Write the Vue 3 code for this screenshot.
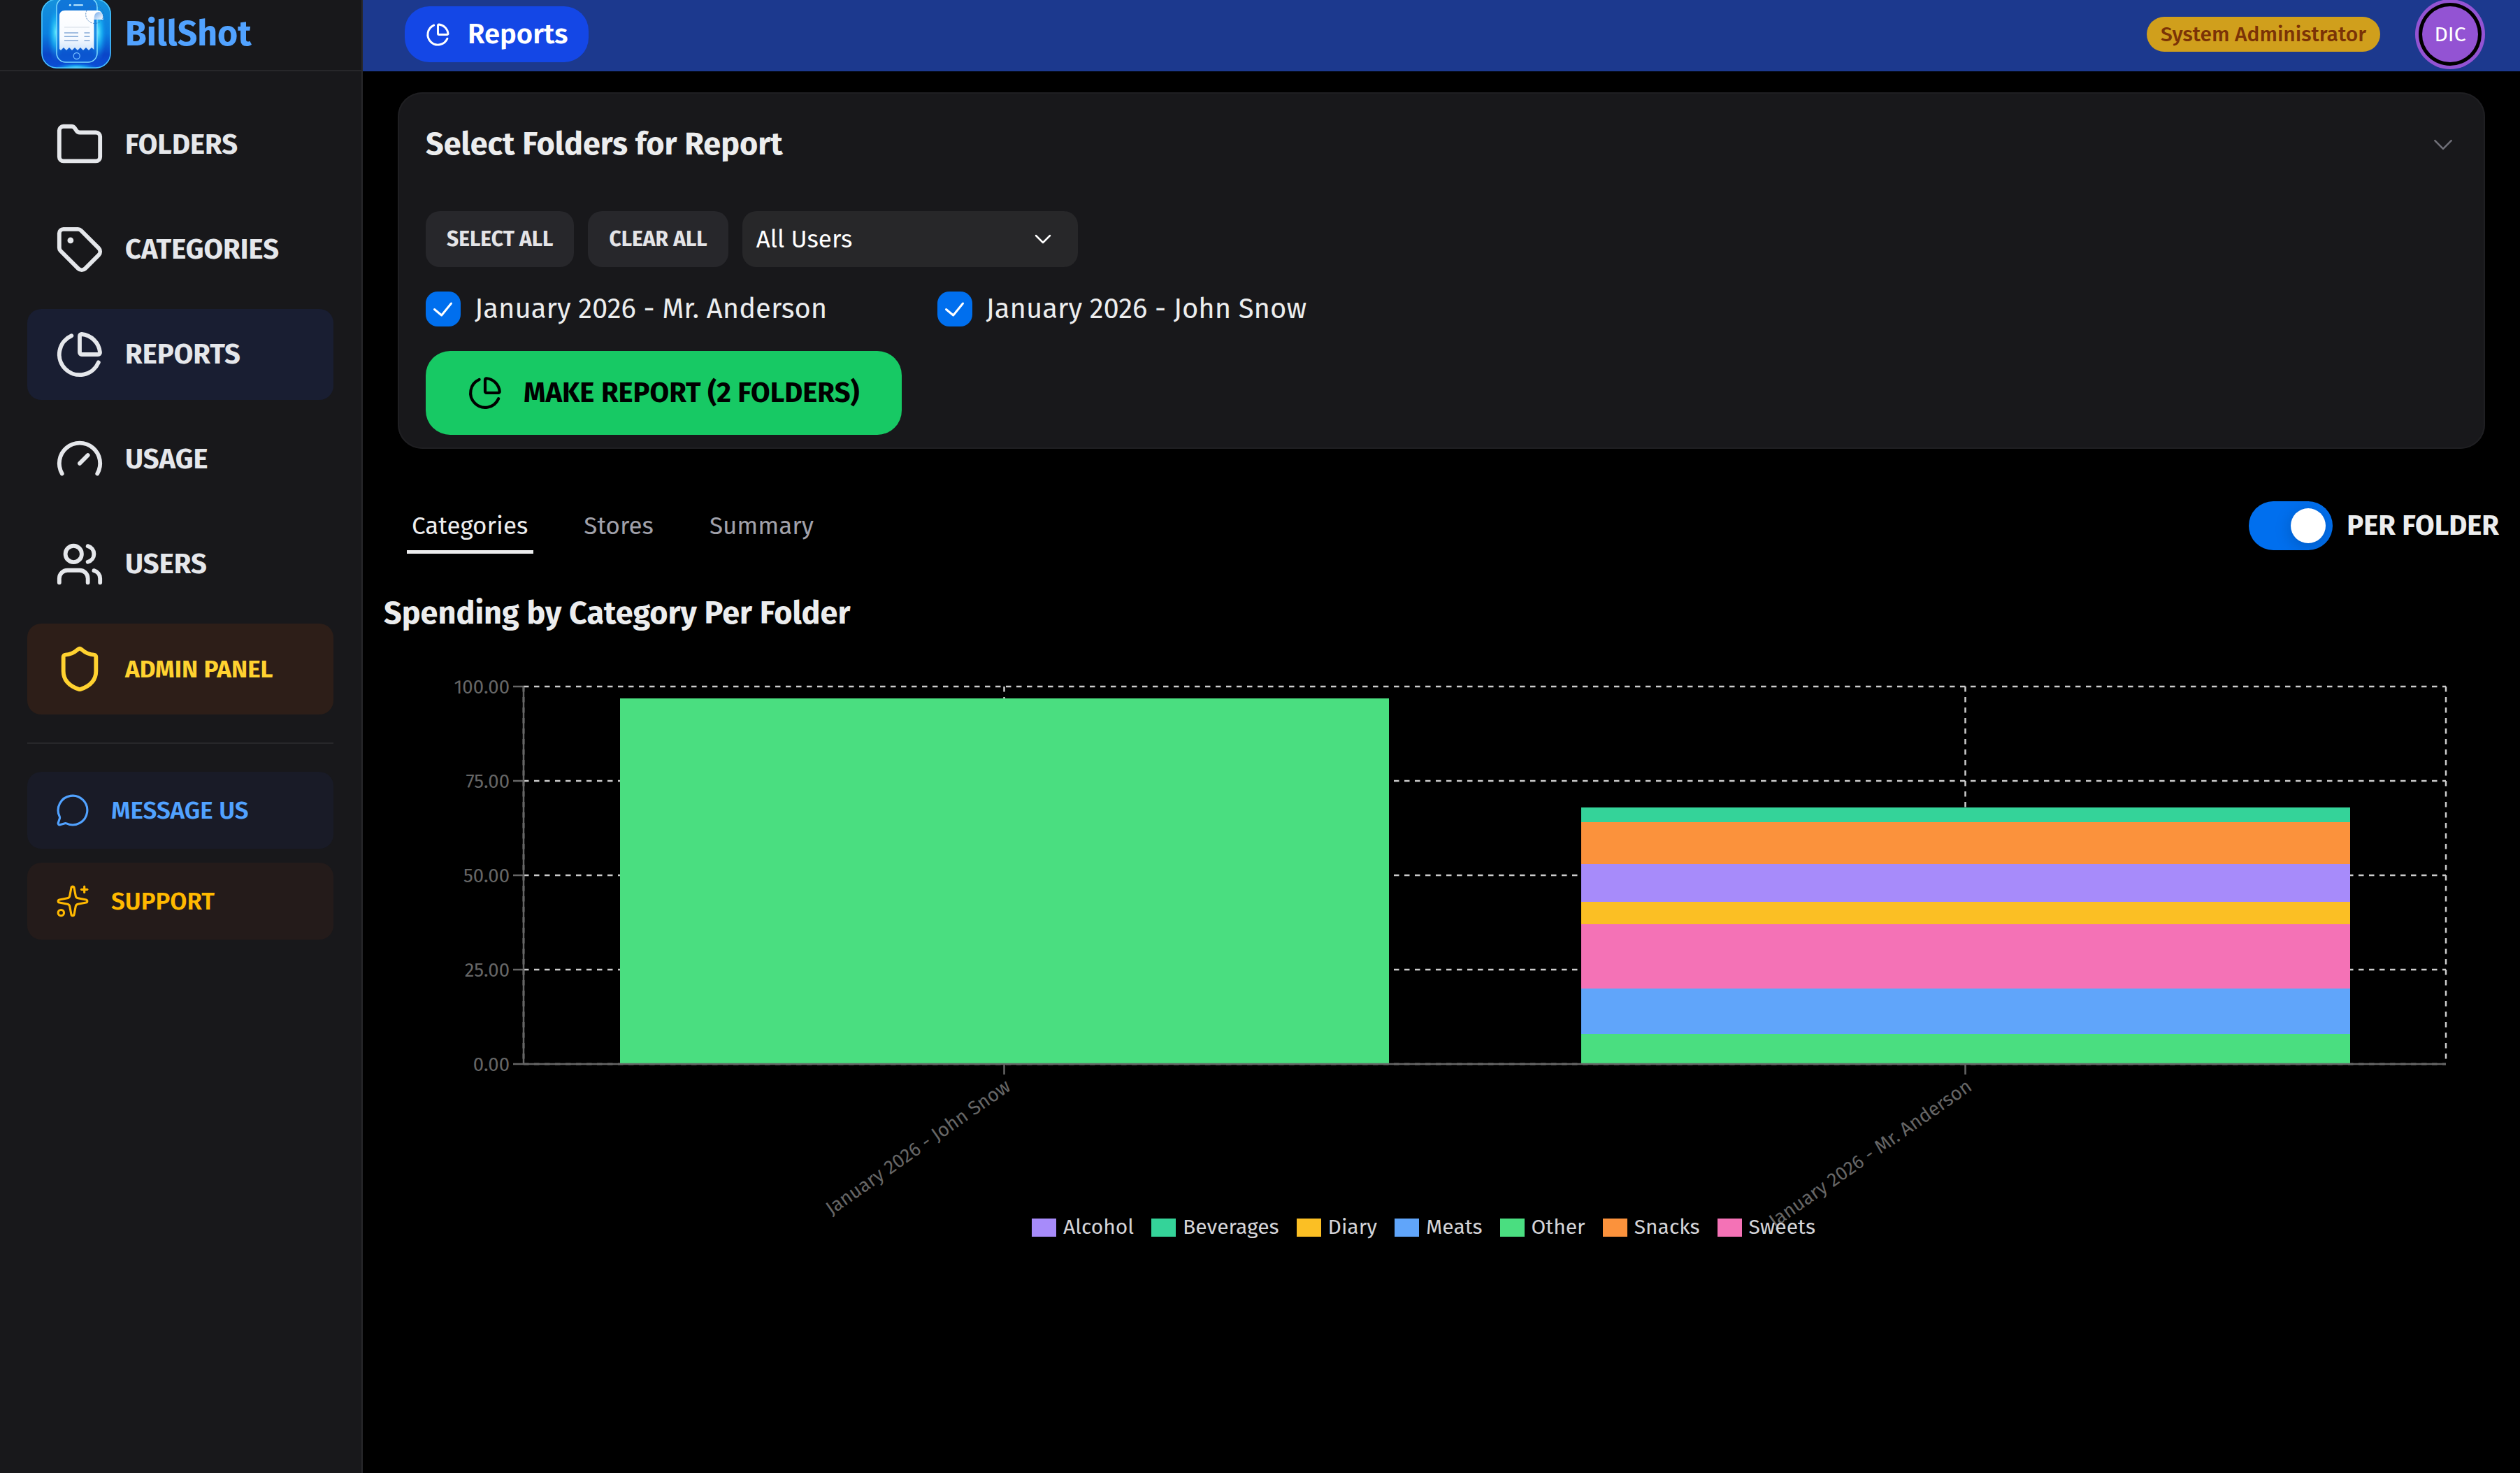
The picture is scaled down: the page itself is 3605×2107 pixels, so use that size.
<template>
	<div class="app">
		<aside class="sidebar">
			<div class="brand">
				<svg class="brand-logo" viewBox="0 0 100 100">
					<defs>
						<linearGradient id="tile" x1="0" y1="0" x2="0" y2="1">
							<stop offset="0" stop-color="#1592dc" />
							<stop offset="0.5" stop-color="#0b80e0" />
							<stop offset="0.8" stop-color="#0a45c8" />
							<stop offset="1" stop-color="#0b4fd8" />
						</linearGradient>
						<radialGradient id="glow">
							<stop offset="0" stop-color="#5feaff" />
							<stop offset="0.5" stop-color="#18b4f5" stop-opacity="0.7" />
							<stop offset="1" stop-color="#0b7be0" stop-opacity="0" />
						</radialGradient>
						<linearGradient id="paper" x1="0" y1="0" x2="0" y2="1">
							<stop offset="0" stop-color="#fff" />
							<stop offset="0.7" stop-color="#f6faff" />
							<stop offset="1" stop-color="#cfe4fb" />
						</linearGradient>
						<linearGradient id="curl" x1="0" y1="0" x2="1" y2="1">
							<stop offset="0" stop-color="#6ea8ea" />
							<stop offset="1" stop-color="#fff" />
						</linearGradient>
						<clipPath id="tileClip"><rect width="100" height="100" rx="22" /></clipPath>
					</defs>
					<g clip-path="url(#tileClip)">
						<rect width="100" height="100" fill="url(#tile)" />
						<ellipse cx="21" cy="48" rx="13" ry="42" fill="url(#glow)" />
						<ellipse cx="81" cy="48" rx="13" ry="42" fill="url(#glow)" />
						<ellipse cx="50" cy="99" rx="32" ry="7" fill="url(#glow)" />
						<rect x="22" y="-1" width="58" height="92" rx="13" fill="#0c62d6" fill-opacity="0.55" stroke="#7fdcff" stroke-width="1.5" />
						<rect x="1" y="1" width="98" height="98" rx="21" fill="none" stroke="#4cc3f7" stroke-width="1.5" />
					</g>
					<circle cx="41.3" cy="9.3" r="1.5" fill="#c9f0ff" />
					<path d="M47 9.3h12" stroke="#c9f0ff" stroke-width="2" stroke-linecap="round" />
					<path d="M26 25q0-8 8-8h46q8.500 0 8.500 13H75.500v43l-3.500-3-4 4-4-4-4 4-4-4-4 4-4-4-4 4-4-4-4 4-4-4-4 4-2-2z" fill="url(#paper)" />
					<path d="M75.500 30q0-11 7-11 6 0 6 11z" fill="url(#curl)" />
					<path d="M33 41h36" stroke="#d3dbe5" stroke-width="1" />
					<path d="M33 49h20M61.500 49h8M33 54.300h20M61.500 54.300h8M33 60h20M61.500 60h8" stroke="#86abd8" stroke-width="1.600" />
					<circle cx="76.500" cy="22.700" r="12.800" fill="none" stroke="#2f6fb4" stroke-width="0.800" stroke-dasharray="2.500 1.500" />
					<circle cx="50.700" cy="82" r="4.500" fill="none" stroke="#6fb8ff" stroke-width="1.300" />
				</svg>
				<span>BillShot</span>
			</div>

			<nav class="nav">
				<a v-for="item in navItems" :key="item.label" class="nav-item" :class="item.variant">
					<svg class="icon" viewBox="0 0 24 24">
						<path v-for="d in icons[item.icon]" :key="d" :d="d" />
					</svg>
					{{ item.label }}
				</a>
			</nav>

			<div class="divider"></div>

			<div class="nav">
				<a v-for="item in helpItems" :key="item.label" class="nav-item small" :class="item.variant">
					<svg class="icon" viewBox="0 0 24 24">
						<path v-for="d in icons[item.icon]" :key="d" :d="d" />
					</svg>
					{{ item.label }}
				</a>
			</div>
		</aside>

		<div class="main">
			<header class="topbar">
				<div class="page-pill">
					<svg class="icon" viewBox="0 0 24 24">
						<path v-for="d in icons.pie" :key="d" :d="d" />
					</svg>
					Reports
				</div>
				<div class="account">
					<span class="role">System Administrator</span>
					<span class="avatar">DIC</span>
				</div>
			</header>

			<main class="content">
				<section class="card">
					<div class="card-header">
						<h2>Select Folders for Report</h2>
						<svg class="icon" viewBox="0 0 24 24"><path d="M5 8.500l7 7 7-7" /></svg>
					</div>
					<div class="card-body">
						<div class="filters">
							<button class="btn">SELECT ALL</button>
							<button class="btn">CLEAR ALL</button>
							<div class="select">
								All Users
								<svg class="icon" viewBox="0 0 24 24"><path d="m6 9 6 6 6-6" /></svg>
							</div>
						</div>
						<div class="folders">
							<label v-for="folder in folders" :key="folder" class="folder">
								<span class="check">
									<svg viewBox="0 0 50 50"><polyline points="12.5,25.5 22.7,34 36.5,17" /></svg>
								</span>
								{{ folder }}
							</label>
						</div>
						<button class="make-report">
							<svg class="icon" viewBox="0 0 24 24">
								<path v-for="d in icons.pie" :key="d" :d="d" />
							</svg>
							MAKE REPORT ({{ folders.length }} FOLDERS)
						</button>
					</div>
				</section>

				<div class="toolbar">
					<div class="tabs">
						<div v-for="tab in tabs" :key="tab" class="tab" :class="{ active: tab === activeTab }" @click="activeTab = tab">
							{{ tab }}
						</div>
					</div>
					<label class="toggle">
						<span class="track"><span class="thumb"></span></span>
						PER FOLDER
					</label>
				</div>

				<h2 class="chart-title">Spending by Category Per Folder</h2>

				<div class="chart">
					<svg class="plot" viewBox="0 0 3026 850">
						<g class="grid">
							<line v-for="t in ticks" :key="t" :x1="plot.left" :x2="plot.right" :y1="yOf(t)" :y2="yOf(t)" />
							<line v-for="x in gridX" :key="x" :x1="x" :x2="x" :y1="plot.top" :y2="plot.bottom" />
						</g>
						<g class="axis">
							<line :x1="plot.left" :x2="plot.left" :y1="plot.top" :y2="plot.bottom" />
							<g v-for="t in ticks" :key="t">
								<line :x1="plot.left - 15" :x2="plot.left" :y1="yOf(t)" :y2="yOf(t)" />
								<text :x="plot.left - 20" :y="yOf(t)" dy="0.355em" text-anchor="end">{{ t.toFixed(2) }}</text>
							</g>
						</g>
						<rect v-for="b in rects" :key="b.key" :x="b.x" :y="b.y" :width="barWidth" :height="b.h" :fill="b.color" shape-rendering="crispEdges" />
						<g class="axis">
							<line :x1="plot.left" :x2="plot.right" :y1="plot.bottom" :y2="plot.bottom" />
							<g v-for="(bar, i) in bars" :key="bar.label">
								<line :x1="centerOf(i)" :x2="centerOf(i)" :y1="plot.bottom" :y2="plot.bottom + 15" />
								<text :x="centerOf(i)" :y="plot.bottom + 20" dy="0.71em" text-anchor="end" :transform="`rotate(-35, ${centerOf(i)}, ${plot.bottom + 20})`">{{ bar.label }}</text>
							</g>
						</g>
					</svg>
					<div class="legend">
						<span v-for="(color, name) in colors" :key="name" class="legend-item">
							<i :style="{ background: color }"></i>{{ name }}
						</span>
					</div>
				</div>
			</main>
		</div>
	</div>
</template>

<script setup>
import { ref, computed } from 'vue'

const icons = {
	folder: ['M20 20a2 2 0 0 0 2-2V8a2 2 0 0 0-2-2h-7.900a2 2 0 0 1-1.690-.900L9.600 3.900A2 2 0 0 0 7.930 3H4a2 2 0 0 0-2 2v13a2 2 0 0 0 2 2Z'],
	tag: [
		'M12.586 2.586A2 2 0 0 0 11.172 2H4a2 2 0 0 0-2 2v7.172a2 2 0 0 0 .586 1.414l8.704 8.704a2.426 2.426 0 0 0 3.420 0l6.580-6.580a2.426 2.426 0 0 0 0-3.420z',
		'M7 7.500a.5.5 0 1 0 1 0a.5.5 0 1 0-1 0',
	],
	pie: [
		'M21 12c.552 0 1.005-.449.950-.998a10 10 0 0 0-8.953-8.951c-.550-.055-.998.398-.998.950v8a1 1 0 0 0 1 1z',
		'M21.210 15.890A10 10 0 1 1 8 2.830',
	],
	gauge: ['m12 14 4-4', 'M3.340 19a10 10 0 1 1 17.320 0'],
	users: [
		'M16 21v-2a4 4 0 0 0-4-4H6a4 4 0 0 0-4 4v2',
		'M16 3.128a4 4 0 0 1 0 7.744',
		'M22 21v-2a4 4 0 0 0-3-3.870',
		'M5 7a4 4 0 1 0 8 0a4 4 0 1 0-8 0',
	],
	shield: ['M20 13c0 5-3.500 7.500-7.660 8.950a1 1 0 0 1-.670-.010C7.500 20.500 4 18 4 13V6a1 1 0 0 1 1-1c2 0 4.500-1.200 6.240-2.720a1.170 1.170 0 0 1 1.520 0C14.510 3.810 17 5 19 5a1 1 0 0 1 1 1z'],
	message: ['M2.992 16.342a2 2 0 0 1 .094 1.167l-1.065 3.290a1 1 0 0 0 1.236 1.168l3.413-.998a2 2 0 0 1 1.099.092 10 10 0 1 0-4.777-4.719'],
	sparkles: [
		'M11.017 2.814a1 1 0 0 1 1.966 0l1.051 5.558a2 2 0 0 0 1.594 1.594l5.558 1.051a1 1 0 0 1 0 1.966l-5.558 1.051a2 2 0 0 0-1.594 1.594l-1.051 5.558a1 1 0 0 1-1.966 0l-1.051-5.558a2 2 0 0 0-1.594-1.594l-5.558-1.051a1 1 0 0 1 0-1.966l5.558-1.051a2 2 0 0 0 1.594-1.594z',
		'M20 2v4',
		'M22 4h-4',
		'M2 20a2 2 0 1 0 4 0a2 2 0 1 0-4 0',
	],
}

const navItems = [
	{ label: 'FOLDERS', icon: 'folder' },
	{ label: 'CATEGORIES', icon: 'tag' },
	{ label: 'REPORTS', icon: 'pie', variant: 'active' },
	{ label: 'USAGE', icon: 'gauge' },
	{ label: 'USERS', icon: 'users' },
	{ label: 'ADMIN PANEL', icon: 'shield', variant: 'admin' },
]

const helpItems = [
	{ label: 'MESSAGE US', icon: 'message', variant: 'message' },
	{ label: 'SUPPORT', icon: 'sparkles', variant: 'support' },
]

const folders = ['January 2026 - Mr. Anderson', 'January 2026 - John Snow']
const tabs = ['Categories', 'Stores', 'Summary']
const activeTab = ref('Categories')

const colors = {
	Alcohol: '#a78bfa',
	Beverages: '#34d399',
	Diary: '#fbbf24',
	Meats: '#60a5fa',
	Other: '#4ade80',
	Snacks: '#fb923c',
	Sweets: '#f472b6',
}

// segments are stacked from the bottom up
const bars = [
	{ label: 'January 2026 - John Snow', values: [['Other', 96.9]] },
	{
		label: 'January 2026 - Mr. Anderson',
		values: [['Other', 8], ['Meats', 12], ['Sweets', 17], ['Diary', 6], ['Alcohol', 10], ['Snacks', 11], ['Beverages', 4]],
	},
]

const ticks = [0, 25, 50, 75, 100]
const plot = { left: 200, right: 2950, top: 40, bottom: 580 }
const band = (plot.right - plot.left) / bars.length
const barWidth = band * 0.8

const yOf = (v) => plot.bottom - (v / 100) * (plot.bottom - plot.top)
const centerOf = (i) => plot.left + band * (i + 0.5)
const gridX = [plot.left, centerOf(0), centerOf(1), plot.right]

const rects = computed(() => bars.flatMap((bar, i) => {
	let total = 0
	return bar.values.map(([name, value]) => {
		const base = yOf(total)
		total += value
		return {
			key: `${i}-${name}`,
			x: Math.round(centerOf(i) - barWidth / 2 + 0.5),
			y: yOf(total),
			h: base - yOf(total),
			color: colors[name],
		}
	})
}))
</script>

<style>
body {
	background: #000;
}
</style>

<style scoped>
.app {
	display: flex;
	width: 3605px;
	height: 2107px;
	overflow: hidden;
	background: #000;
	color: #ecedee;
	font-family: "Fira Sans", "Noto Sans", "Open Sans", sans-serif;
	line-height: 1.5;
}

.icon {
	flex: none;
	fill: none;
	stroke: currentColor;
	stroke-width: 2;
	stroke-linecap: round;
	stroke-linejoin: round;
}

.sidebar {
	box-sizing: border-box;
	flex: none;
	width: 519px;
	background: #18181b;
	border-right: 2px solid #27272a;
}

.brand {
	box-sizing: border-box;
	display: flex;
	align-items: center;
	gap: 20px;
	height: 102px;
	padding: 0 0 4px 59px;
	border-bottom: 2px solid #27272a;
	color: #51a2ff;
	font-size: 50px;
	font-weight: 700;
}

.brand-logo {
	flex: none;
	width: 100px;
	height: 100px;
}

.nav {
	display: flex;
	flex-direction: column;
	gap: 20px;
	padding: 40px 40px 0 39px;
}

.nav-item {
	display: flex;
	align-items: center;
	gap: 30px;
	height: 130px;
	padding-left: 40px;
	border-radius: 20px;
	color: #e5e7eb;
	font-size: 40px;
	font-weight: 700;
}

.nav-item .icon {
	width: 70px;
	height: 70px;
}

.nav-item.active {
	background: #191e32;
}

.nav-item.admin {
	background: #2d1e18;
	color: #ffd230;
	font-size: 35px;
}

.nav-item.small {
	height: 110px;
	font-size: 35px;
	font-weight: 600;
}

.nav-item.small .icon {
	width: 50px;
	height: 50px;
	stroke-width: 1.5;
}

.nav-item.message {
	background: #191b27;
	color: #51a2ff;
}

.nav-item.support {
	background: #241b1a;
	color: #ffb900;
}

.divider {
	height: 2px;
	margin: 40px 40px 0 39px;
	background: #27272a;
}

.main {
	flex: 1;
	min-width: 0;
}

.topbar {
	box-sizing: border-box;
	display: flex;
	align-items: center;
	justify-content: space-between;
	height: 102px;
	padding: 0 60px 4px;
	background: #1c398e;
}

.page-pill {
	display: flex;
	align-items: center;
	gap: 25px;
	height: 80px;
	padding: 0 30px;
	border-radius: 35px;
	background: #1447e6;
	color: #fff;
	font-size: 40px;
	font-weight: 600;
}

.page-pill .icon {
	width: 35px;
	height: 35px;
}

.account {
	display: flex;
	align-items: center;
	gap: 60px;
}

.role {
	padding: 0 20px;
	border-radius: 25px;
	background: #d09f1c;
	color: #7b3306;
	font-size: 30px;
	font-weight: 500;
	line-height: 50px;
}

.avatar {
	width: 80px;
	height: 80px;
	border-radius: 50%;
	background: #9353d3;
	box-shadow: 0 0 0 5px #000, 0 0 0 10px #9353d3;
	color: #fff;
	font-size: 30px;
	line-height: 80px;
	text-align: center;
}

.content {
	padding: 30px;
}

.card {
	box-sizing: border-box;
	height: 510px;
	margin: 0 20px;
	padding: 0 40px;
	border-radius: 35px;
	background: #18181b;
	box-shadow: inset 0 0 0 2px #1f1f22;
}

.card-header {
	display: flex;
	align-items: center;
	justify-content: space-between;
	height: 150px;
}

.card-header h2,
.chart-title {
	margin: 0;
	font-size: 45px;
	font-weight: 700;
}

.card-header .icon {
	width: 40px;
	height: 40px;
	stroke-width: 1.5;
	color: #71717a;
}

.card-body {
	display: flex;
	flex-direction: column;
	align-items: flex-start;
	gap: 35px;
	padding-top: 20px;
}

.filters {
	display: flex;
	gap: 20px;
}

.btn {
	height: 80px;
	padding: 0 30px;
	border: 0;
	border-radius: 20px;
	background: #27272b;
	color: #e4e4e7;
	font-family: inherit;
	font-size: 30px;
	font-weight: 700;
}

.select {
	box-sizing: border-box;
	display: flex;
	align-items: center;
	justify-content: space-between;
	width: 480px;
	height: 80px;
	padding: 0 30px 0 20px;
	border-radius: 20px;
	background: #272729;
	color: #fff;
	font-size: 35px;
}

.select .icon {
	width: 40px;
	height: 40px;
	stroke-width: 1.5;
}

.folders {
	display: grid;
	grid-template-columns: repeat(4, 1fr);
	gap: 20px;
	width: 100%;
}

.folder {
	display: flex;
	align-items: center;
	gap: 20px;
	height: 50px;
	font-size: 40px;
}

.check {
	width: 50px;
	height: 50px;
	border-radius: 17px;
	background: #006fee;
}

.check svg {
	display: block;
	fill: none;
	stroke: #fff;
	stroke-width: 3;
	stroke-linecap: round;
	stroke-linejoin: round;
}

.make-report {
	display: flex;
	align-items: center;
	gap: 30px;
	height: 120px;
	padding: 0 60px;
	border: 0;
	border-radius: 35px;
	background: #17c964;
	color: #000;
	font-family: inherit;
	font-size: 40px;
	font-weight: 700;
}

.make-report .icon {
	width: 50px;
	height: 50px;
}

.toolbar {
	display: flex;
	align-items: center;
	justify-content: space-between;
	height: 80px;
	margin-top: 70px;
}

.tabs {
	display: flex;
	gap: 20px;
	padding-left: 10px;
}

.tab {
	position: relative;
	padding: 0 30px;
	color: #a1a1aa;
	font-size: 35px;
	line-height: 80px;
}

.tab.active {
	color: #ecedee;
}

.tab.active::after {
	content: "";
	position: absolute;
	right: 10%;
	bottom: 0;
	left: 10%;
	height: 5px;
	background: #ecedee;
}

.toggle {
	display: flex;
	align-items: center;
	gap: 20px;
	font-size: 40px;
	font-weight: 700;
}

.track {
	box-sizing: border-box;
	display: flex;
	justify-content: flex-end;
	width: 120px;
	height: 70px;
	padding: 10px;
	border-radius: 35px;
	overflow: hidden;
	background: #006fee;
}

.thumb {
	width: 50px;
	height: 50px;
	border-radius: 50%;
	background: #fff;
	box-shadow: 0 5px 25px rgba(0, 0, 0, 0.2);
}

.chart-title {
	margin-top: 50px;
	line-height: 70px;
}

.chart {
	position: relative;
	margin-top: 30px;
}

.plot {
	display: block;
	width: 3026px;
	height: 850px;
}

.grid line {
	stroke: #ccc;
	stroke-width: 2.5;
	stroke-dasharray: 7.5 7.5;
}

.axis line {
	stroke: #666;
	stroke-width: 2.5;
}

.axis text {
	fill: #666;
	font-size: 27.5px;
}

/* sits over the slanted tick labels */
.legend {
	position: absolute;
	top: 791px;
	right: 0;
	left: 0;
	display: flex;
	justify-content: center;
	gap: 25px;
	padding-right: 51px;
	color: #d4d4d8;
	font-size: 30px;
	line-height: 45px;
}

.legend-item {
	display: flex;
	align-items: center;
	gap: 10px;
}

.legend-item i {
	width: 35px;
	height: 26px;
}
</style>
